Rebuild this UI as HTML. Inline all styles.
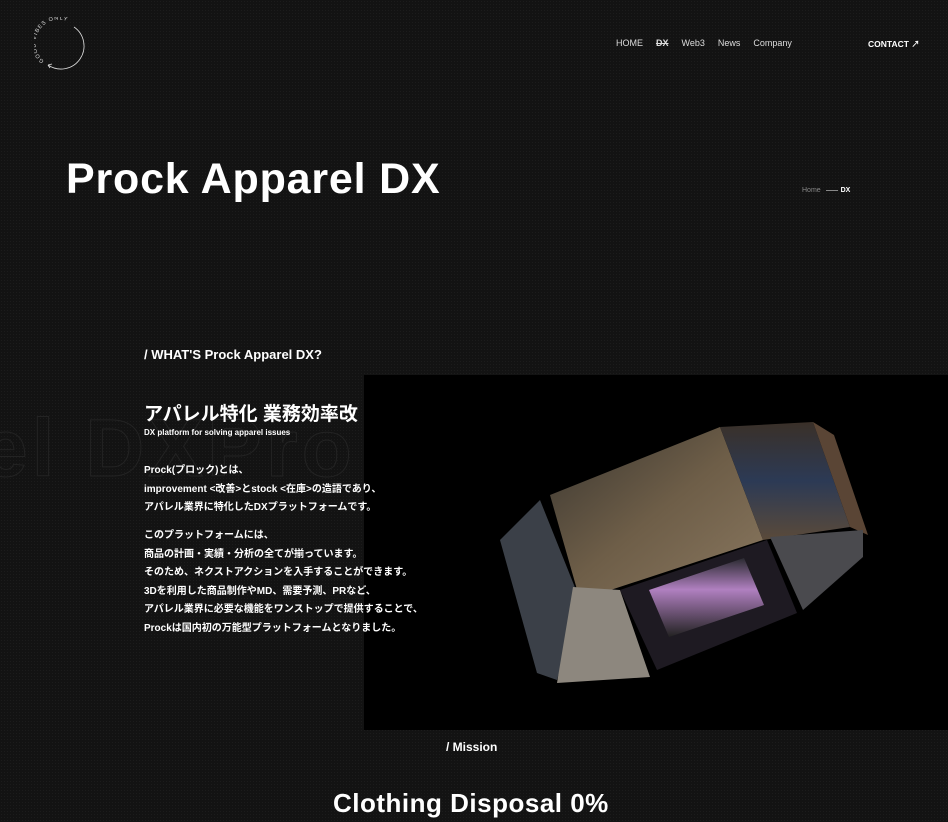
<!DOCTYPE html>
<html><head><meta charset="utf-8"><style>
*{margin:0;padding:0;box-sizing:border-box}
body{width:948px;height:822px;overflow:hidden;background:#131313;background-image:radial-gradient(#1c1c1c 0.6px,transparent 0.8px);background-size:3px 3px;color:#fff;font-family:"Liberation Sans","Noto Sans CJK JP",sans-serif;position:relative}
.a{position:absolute;white-space:nowrap}
nav span{margin-right:13px}
.p{font-size:10px;font-weight:bold;line-height:18.5px}
</style></head><body>
<svg class="a" style="left:34px;top:17px" width="56" height="56" viewBox="0 0 56 56">
<defs><path id="c" d="M10 44 A22 22 0 0 1 40 8"/></defs>
<path d="M40 10 A22 22 0 0 1 14 48" fill="none" stroke="#ddd" stroke-width="0.8"/>
<path d="M14 48 l4 -1 M14 48 l2 3" stroke="#ddd" stroke-width="0.8"/>
<text font-size="5.5" fill="#ddd" letter-spacing="1"><textPath href="#c">GOOD VIBES ONLY</textPath></text>
</svg>
<nav class="a" style="left:616px;top:38px;font-size:9px;color:#ddd"><span>HOME</span><span style="font-weight:bold;text-decoration:line-through">DX</span><span>Web3</span><span>News</span><span>Company</span></nav>
<div class="a" style="left:868px;top:38px;font-size:8.5px;font-weight:bold">CONTACT ↗</div>
<div class="a" style="left:66px;top:155px;font-size:43px;font-weight:bold;letter-spacing:0.8px">Prock Apparel DX</div>
<div class="a" style="left:802px;top:187px;font-size:7px;color:#888">Home <span style="display:inline-block;width:12px;border-top:1px solid #888;vertical-align:middle;margin:0 3px"></span><b style="color:#fff">DX</b></div>
<div class="a" style="left:144px;top:347px;font-size:13px;font-weight:bold">/ WHAT'S Prock Apparel DX?</div>
<div class="a" style="left:-18px;top:402px;font-size:82px;font-weight:bold;color:transparent;-webkit-text-stroke:1px #232323;letter-spacing:4px">el DXPro</div>
<div class="a" style="left:364px;top:375px;width:584px;height:355px;background:#000;overflow:hidden">
<svg width="584" height="355" viewBox="0 0 584 355">
<defs>
<linearGradient id="g1" x1="0" y1="0" x2="1" y2="1"><stop offset="0" stop-color="#3a3630"/><stop offset=".5" stop-color="#6e5e48"/><stop offset="1" stop-color="#8a7860"/></linearGradient>
<linearGradient id="g2" x1="0" y1="0" x2="0" y2="1"><stop offset="0" stop-color="#3a3028"/><stop offset=".5" stop-color="#2c3a55"/><stop offset="1" stop-color="#5a4a3a"/></linearGradient>
<linearGradient id="g3" x1="0" y1="0" x2="0" y2="1"><stop offset="0" stop-color="#2a2a30"/><stop offset=".4" stop-color="#b080c0"/><stop offset="1" stop-color="#222"/></linearGradient>
</defs>
<polygon points="136,165 176,125 216,225 193,305 173,298" fill="#3b4048"/>
<polygon points="186,120 356,52 399,165 216,225" fill="url(#g1)"/>
<polygon points="356,52 449,47 486,152 399,165" fill="url(#g2)"/>
<polygon points="449,47 470,60 504,160 486,152" fill="#5a4535"/>
<polygon points="209,212 256,215 286,302 193,308" fill="#8d877e"/>
<polygon points="256,215 403,165 433,238 293,295" fill="#1e1a22"/>
<polygon points="285,215 380,183 400,230 305,262" fill="url(#g3)"/>
<polygon points="406,162 499,155 499,182 439,235" fill="#4a4a4e"/>
</svg>
</div>
<div class="a" style="left:144px;top:399px;font-size:19px;font-weight:bold">アパレル特化 業務効率改</div>
<div class="a" style="left:144px;top:428px;font-size:8px;font-weight:bold">DX platform for solving apparel issues</div>
<div class="a p" style="left:144px;top:462px">Prock(プロック)とは、<br>improvement &lt;改善&gt;とstock &lt;在庫&gt;の造語であり、<br>アパレル業界に特化したDXプラットフォームです。</div>
<div class="a p" style="left:144px;top:527px">このプラットフォームには、<br>商品の計画・実績・分析の全てが揃っています。<br>そのため、ネクストアクションを入手することができます。<br>3Dを利用した商品制作やMD、需要予測、PRなど、<br>アパレル業界に必要な機能をワンストップで提供することで、<br>Prockは国内初の万能型プラットフォームとなりました。</div>
<div class="a" style="left:446px;top:740px;font-size:12px;font-weight:bold">/ Mission</div>
<div class="a" style="left:333px;top:788px;font-size:26px;font-weight:bold;letter-spacing:0.5px">Clothing Disposal 0%</div>
</body></html>
